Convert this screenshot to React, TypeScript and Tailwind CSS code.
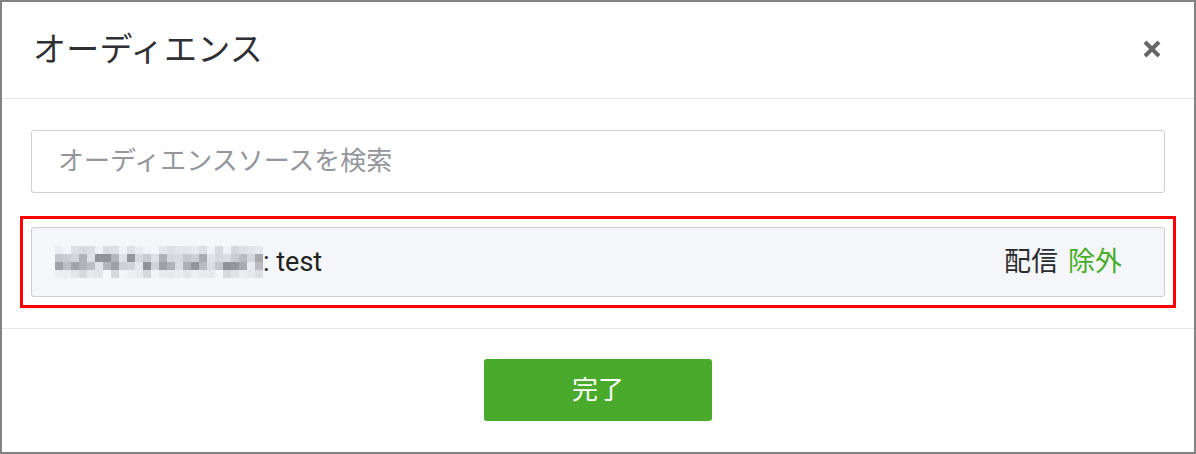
import React from 'react';

const FONT = { fontFamily: 'Roboto, "Noto Sans CJK JP", sans-serif' };

// mosaic that hides the audience id
function Mosaic() {
  const cols = 26;
  const rows = 4;
  let seed = 11;
  const rand = () => {
    seed = (seed * 9301 + 49297) % 233280;
    return seed / 233280;
  };
  const cells: string[] = [];
  for (let r = 0; r < rows; r++) {
    for (let c = 0; c < cols; c++) {
      const edge = r === 0 || r === rows - 1;
      const base = edge ? 215 : 145;
      const spread = edge ? 35 : 95;
      const v = Math.round(base + rand() * spread);
      cells.push(`rgb(${v - 4}, ${v - 2}, ${v + 4})`);
    }
  }
  return (
    <div className="grid grid-cols-[repeat(26,8px)] grid-rows-[repeat(4,8px)]">
      {cells.map((bg, i) => (
        <div key={i} style={{ backgroundColor: bg }} />
      ))}
    </div>
  );
}

export default function App() {
  return (
    <div
      className="w-[1196px] h-[454px] border-2 border-[#828282] bg-white flex flex-col text-[#333]"
      style={FONT}
    >
      {/* header */}
      <div className="h-[97px] shrink-0 flex items-center justify-between pl-[31px] pr-[31px] border-b border-[#e6e6ea]">
        <h2 className="text-[33px] leading-none text-[#2f3033] tracking-[0.3px] -mt-[2px]">オーディエンス</h2>
        <button className="w-[22px] h-[22px] flex items-center justify-center -mt-[2px]">
          <svg width="20" height="20" viewBox="0 0 20 20">
            <path d="M3 3 L17 17 M17 3 L3 17" stroke="#666" strokeWidth="4" strokeLinecap="butt" />
          </svg>
        </button>
      </div>

      {/* body */}
      <div className="flex-1 flex flex-col px-[29px] pt-[31px] pb-[20px] border-b border-[#e6e6ea]">
        <div className="h-[63px] border border-[#cfcfd2] rounded-[3px] flex items-center px-[26px]">
          <span className="text-[26px] text-[#94969c]">オーディエンスソースを検索</span>
        </div>

        <div className="mt-[23px] -mx-[11px] border-[3px] border-[#ff0000] px-[8px] py-[8px]">
          <div className="h-[70px] bg-[#f5f6f9] border border-[#cdcdd1] rounded-[3px] flex items-center justify-between pl-[23px] pr-[42px]">
            <div className="flex items-center">
              <Mosaic />
              <span className="text-[27px] text-[#222]">: test</span>
            </div>
            <div className="flex items-center gap-[10px] text-[27px]">
              <span className="text-[#2b2b2e]">配信</span>
              <span className="text-[#46ac2a]">除外</span>
            </div>
          </div>
        </div>
      </div>

      {/* footer */}
      <div className="h-[124px] shrink-0 flex items-center justify-center">
        <button className="w-[228px] h-[62px] bg-[#4aaa2b] rounded-[3px] text-white text-[26px] -mt-[2px]">
          完了
        </button>
      </div>
    </div>
  );
}
